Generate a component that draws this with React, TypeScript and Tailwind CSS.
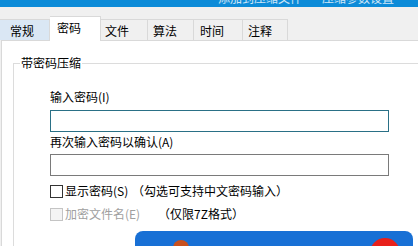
import React from "react";

const tabs = [
  { label: "常规", w: "w-[50px]", pl: "pl-[10px]", bg: "bg-[#dae7f4]" },
  { label: "密码", w: "w-[51px]", pl: "pl-[7px]", selected: true },
  { label: "文件", w: "w-[47px]", pl: "pl-[4px]" },
  { label: "算法", w: "w-[46px]", pl: "pl-[5px]" },
  { label: "时间", w: "w-[49px]", pl: "pl-[6px]" },
  { label: "注释", w: "w-[45px]", pl: "pl-[5px]" },
];

export default function App() {
  return (
    <div
      className="relative w-[418px] h-[246px] overflow-hidden bg-[#f0f0f0] text-[12px] text-black"
      style={{ fontFamily: '"Noto Sans CJK SC", "Noto Sans", sans-serif' }}
    >
      {/* title bar remnant */}
      <div className="relative h-[7px] bg-[#0c8bd8] overflow-hidden">
        <div className="absolute left-[218px] top-[-8px] flex gap-[20px] text-[12px] leading-[12px] text-white/80 whitespace-nowrap">
          <span>添加到压缩文件</span>
          <span>压缩参数设置</span>
        </div>
      </div>

      {/* tab strip */}
      <div className="flex items-end h-[33px]">
        {tabs.map((t) =>
          t.selected ? (
            <div
              key={t.label}
              className={`${t.w} ${t.pl} h-[25px] -mb-px relative z-10 bg-white border-t border-r border-[#d9d9d9] leading-[19px] pt-[1px]`}
            >
              {t.label}
            </div>
          ) : (
            <div
              key={t.label}
              className={`${t.w} ${t.pl} h-[21px] ${t.bg ?? "bg-[#f0f0f0]"} border-t border-r border-[#d9d9d9] leading-[20px] pt-[1px]`}
            >
              {t.label}
            </div>
          )
        )}
      </div>

      {/* tab panel */}
      <div className="ml-px h-[206px] bg-white border-t border-l border-[#d9d9d9]">
        <div className="relative ml-[11px] mt-[22px] h-[200px] border-t border-l border-[#dcdcdc]">
          <div className="absolute left-[6px] top-[-8px] bg-white px-px leading-[14px] text-[12px]">
            带密码压缩
          </div>
          <div className="pt-[26px] pl-[36px]">
            <div className="h-[14px] leading-[14px]">输入密码(I)</div>
            <div className="mt-[6px] h-[22px] w-[339px] border border-[#2a7086] bg-white" />
            <div className="mt-[3px] h-[14px] leading-[14px]">再次输入密码以确认(A)</div>
            <div className="mt-[5px] h-[22px] w-[339px] border border-[#7a7a7a] bg-white" />
            <div className="mt-[8px] h-[14px] flex items-center leading-[14px]">
              <div className="shrink-0 w-[13px] h-[13px] border border-[#333333] bg-white" />
              <span className="shrink-0 ml-[2px] w-[67px] whitespace-nowrap">显示密码(S)</span>
              <span className="whitespace-nowrap">（勾选可支持中文密码输入）</span>
            </div>
            <div className="mt-[9px] h-[14px] flex items-center leading-[14px]">
              <div className="shrink-0 w-[13px] h-[13px] border border-[#c4c4c4] bg-[#f4f4f4]" />
              <span className="shrink-0 ml-[2px] w-[93px] whitespace-nowrap text-[#a0a0a0]">加密文件名(E)</span>
              <span className="whitespace-nowrap">（仅限7Z格式）</span>
            </div>
          </div>
        </div>
      </div>

      {/* overlay popup */}
      <div className="absolute left-[135px] top-[231px] w-[278px] h-[30px] rounded-t-[8px] bg-[#1870d5] overflow-hidden">
        <div className="absolute left-[38px] top-[9px] w-[16px] h-[16px] rounded-full bg-[#c8501e]" />
        <div className="absolute left-[235px] top-[7px] w-[30px] h-[30px] rounded-full bg-[#e8201a]" />
      </div>
    </div>
  );
}
